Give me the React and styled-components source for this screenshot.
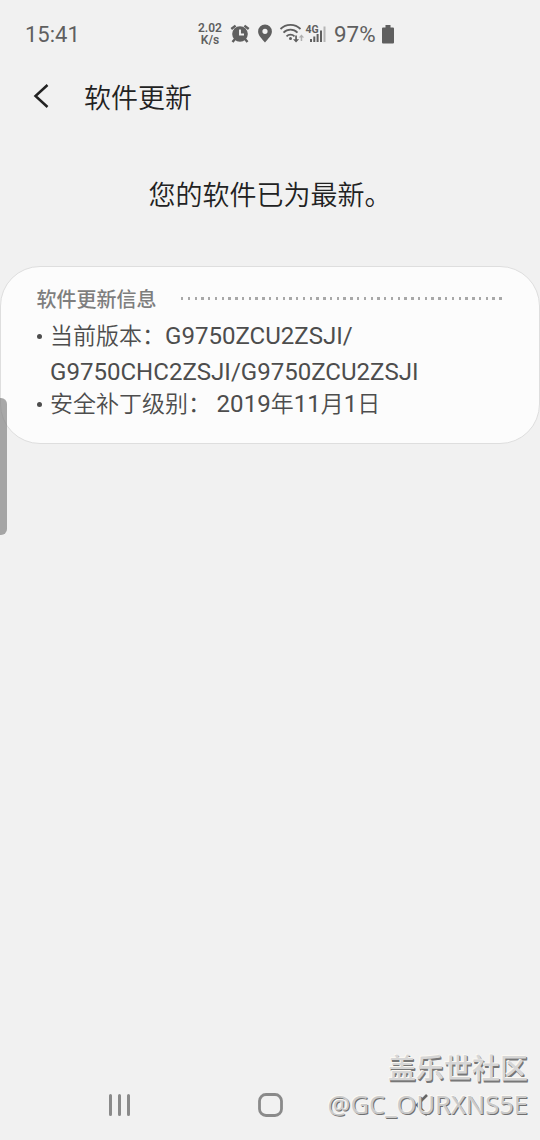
import React from 'react'
import styled, { createGlobalStyle } from 'styled-components'

const colors = {
  background: '#f1f1f1',
  card: '#fcfcfc',
  divider: '#dedede',
  title: '#222222',
  text: '#4d4d4d',
  muted: '#7e7e7e',
  status: '#5f5f5f',
  nav: '#8a8a8a',
}

const GlobalStyle = createGlobalStyle`
  * {
    box-sizing: border-box;
  }

  body {
    margin: 0;
    background: ${colors.background};
    font-family: Roboto, 'Noto Sans CJK SC', sans-serif;
  }
`

const Screen = styled.div`
  position: relative;
  display: flex;
  flex-direction: column;
  width: 540px;
  height: 1140px;
  overflow: hidden;
  background: ${colors.background};
`

const StatusBar = styled.header`
  display: flex;
  align-items: center;
  flex: 0 0 68px;
  padding-left: 25px;
  color: ${colors.status};
`

const Clock = styled.span`
  width: 171px;
  padding-top: 1px;
  font-size: 22px;
  line-height: 28px;
`

const NetworkSpeed = styled.div`
  display: flex;
  flex-direction: column;
  align-items: center;
  width: 28px;
  margin-right: 6px;
  font-size: 12px;
  font-weight: 600;
  line-height: 12px;
`

const StatusIcons = styled.svg`
  flex: 0 0 98px;
`

const SignalLabel = styled.text`
  font-size: 10.5px;
  font-weight: 700;
`

const BatteryLevel = styled.span`
  width: 43px;
  margin-left: 6px;
  margin-right: 5px;
  font-size: 22.4px;
  line-height: 28px;
`

const TitleBar = styled.div`
  display: flex;
  align-items: center;
  flex: 0 0 56px;
  padding-left: 32px;
`

const PageTitle = styled.h1`
  margin: 0 0 0 34px;
  padding-top: 5px;
  color: ${colors.title};
  font-size: 27px;
  font-weight: 350;
  line-height: 40px;
`

const Message = styled.p`
  flex: 0 0 142px;
  min-height: 0;
  margin: 0;
  color: ${colors.title};
  font-size: 27px;
  font-weight: 350;
  line-height: 144px;
  text-align: center;
`

const Card = styled.section`
  flex: 0 0 178px;
  padding: 18px 35.5px 0;
  border: 1px solid ${colors.divider};
  border-radius: 40px;
  background: ${colors.card};
`

const SectionHeader = styled.div`
  display: flex;
  align-items: center;
  height: 30px;
`

const SectionTitle = styled.h2`
  margin: 0 24px 0 0;
  color: ${colors.muted};
  font-size: 20px;
  font-weight: 500;
  line-height: 30px;
`

const DottedLine = styled.div`
  width: 321px;
  height: 3px;
  margin-top: -3px;
  background: repeating-linear-gradient(
    to right,
    #a8a8a8 0 2.4px,
    transparent 2.4px 6.77px
  );
`

const InfoList = styled.ul`
  margin: 0;
  padding: 4px 0 0;
  list-style: none;
`

const InfoItem = styled.li`
  display: flex;
  color: ${colors.text};
  font-size: 23px;
  font-weight: 350;
  line-height: 35px;
  white-space: pre;

  & + & {
    margin-top: -2px;
  }

  &::before {
    content: '';
    flex: 0 0 5px;
    height: 5px;
    margin: 15px 8px 0 0.5px;
    border-radius: 50%;
    background: ${colors.text};
  }
`

const Latin = styled.span`
  font-size: 24.05px;
  font-weight: 400;
`

const LatinLine = styled(Latin)`
  display: block;
  padding-top: 1px;
  line-height: 34px;
`

const EdgeHandle = styled.div`
  position: absolute;
  top: 398px;
  left: 0;
  width: 7px;
  height: 137px;
  border-radius: 0 6px 6px 0;
  background: rgba(128, 128, 128, 0.68);
`

const NavigationBar = styled.nav`
  display: flex;
  align-items: center;
  flex: 0 0 70px;
  margin-top: auto;
  padding-left: 108px;
`

const RecentsIcon = styled.svg`
  margin-right: 126px;
`

const HomeIcon = styled.svg`
  margin-right: 131px;
`

const Watermark = styled.div`
  position: absolute;
  right: 12px;
  bottom: 18px;
  text-align: right;
`

const Community = styled.div`
  color: #d6d6d6;
  font-family: 'Noto Sans CJK SC', sans-serif;
  font-size: 28px;
  font-weight: 500;
  line-height: 39px;
  text-shadow: -1px -1px 0 #fbf8f2, 1px 1px 0 #777777, 1px 2px 0 #777777;
`

const Username = styled.div`
  color: #cacaca;
  font-family: 'Noto Sans', sans-serif;
  font-size: 25.5px;
  line-height: 35px;
  text-shadow: -1px -1px 0 #fbf8f2, 1px 1px 0 #707070;
`

export default () => (
  <>
    <GlobalStyle />
    <Screen lang="zh-CN">
      <StatusBar>
        <Clock>15:41</Clock>
        <NetworkSpeed>
          <span>2.02</span>
          <span>K/s</span>
        </NetworkSpeed>
        <StatusIcons width="98" height="24" viewBox="230 22 98 24" fill={colors.status}>
          {/* alarm */}
          <circle cx="240" cy="34" r="7.8" />
          <path
            d="M231.3 29l4.3-3.4M248.7 29l-4.3-3.4M235 39l-2.5 3M245 39l2.5 3"
            stroke={colors.status}
            strokeWidth="2.4"
          />
          <path d="M240 29.5v5h4" fill="none" stroke={colors.background} strokeWidth="1.9" />
          {/* location */}
          <path
            fillRule="evenodd"
            d="M265 24.5a6.9 6.9 0 0 0-6.9 6.9c0 4.3 4.2 7.5 6.9 11 2.7-3.5 6.9-6.7 6.9-11a6.9 6.9 0 0 0-6.9-6.9zm0 4.2a2.6 2.6 0 1 1 0 5.2 2.6 2.6 0 0 1 0-5.2z"
          />
          {/* wifi */}
          <g fill="none" stroke={colors.status} strokeWidth="1.8">
            <path d="M280.5 29c5.5-5.4 14.5-5.4 20 0M283.5 32.7c3.9-4 10.1-4 14 0M286.5 36.3c2.3-2.3 5.7-2.3 8 0" />
          </g>
          <circle cx="290.5" cy="38.5" r="1.5" />
          <path d="M295.2 35.5h1.7v3.8h2.2l-3.05 3.2-3.05-3.2h2.2z" />
          <path d="M300.7 41h1.5v-3.5h2l-2.75-3-2.75 3h2z" opacity="0.45" />
          {/* mobile signal */}
          <SignalLabel x="305.5" y="33">
            4G
          </SignalLabel>
          <path d="M310 39h2v3h-2zM313.3 36.5h2V42h-2zM316.6 34h2v8h-2zM320 30.5h2V42h-2z" />
          <path d="M323.5 26.5h2V42h-2z" opacity="0.4" />
        </StatusIcons>
        <BatteryLevel>97%</BatteryLevel>
        <svg width="12" height="19" viewBox="0 0 12 19" fill={colors.status}>
          <path d="M3.5 0h5v2.5h2.5a1 1 0 0 1 1 1V17.5a1 1 0 0 1-1 1H1a1 1 0 0 1-1-1V3.500a1 1 0 0 1 1-1h2.500z" />
        </svg>
      </StatusBar>
      <TitleBar>
        <svg width="18" height="26" viewBox="0 0 18 26">
          <path d="M15.5 2L3.5 13l12 11" fill="none" stroke={colors.title} strokeWidth="2.5" />
        </svg>
        <PageTitle>软件更新</PageTitle>
      </TitleBar>
      <Message>您的软件已为最新。</Message>
      <Card>
        <SectionHeader>
          <SectionTitle>软件更新信息</SectionTitle>
          <DottedLine />
        </SectionHeader>
        <InfoList>
          <InfoItem>
            <div>
              当前版本：<Latin>G9750ZCU2ZSJI/</Latin>
              <LatinLine>G9750CHC2ZSJI/G9750ZCU2ZSJI</LatinLine>
            </div>
          </InfoItem>
          <InfoItem>
            <div>
              安全补丁级别： <Latin>2019</Latin>年<Latin>11</Latin>月<Latin>1</Latin>日
            </div>
          </InfoItem>
        </InfoList>
      </Card>
      <NavigationBar>
        <RecentsIcon width="24" height="24" viewBox="0 0 24 24">
          <path
            d="M2.5 2.5v19M11.5 2.5v19M20.5 2.5v19"
            stroke={colors.nav}
            strokeWidth="3"
            strokeLinecap="round"
          />
        </RecentsIcon>
        <HomeIcon width="25" height="24" viewBox="0 0 25 24">
          <rect
            x="1.5"
            y="1.5"
            width="22"
            height="21"
            rx="6.5"
            fill="none"
            stroke={colors.nav}
            strokeWidth="2.8"
          />
        </HomeIcon>
        <svg width="16" height="24" viewBox="0 0 16 24">
          <path d="M13 2L3 12l10 10" fill="none" stroke="#666666" strokeWidth="2.6" />
        </svg>
      </NavigationBar>
      <EdgeHandle />
      <Watermark>
        <Community>盖乐世社区</Community>
        <Username>@GC_OURXNS5E</Username>
      </Watermark>
    </Screen>
  </>
)
